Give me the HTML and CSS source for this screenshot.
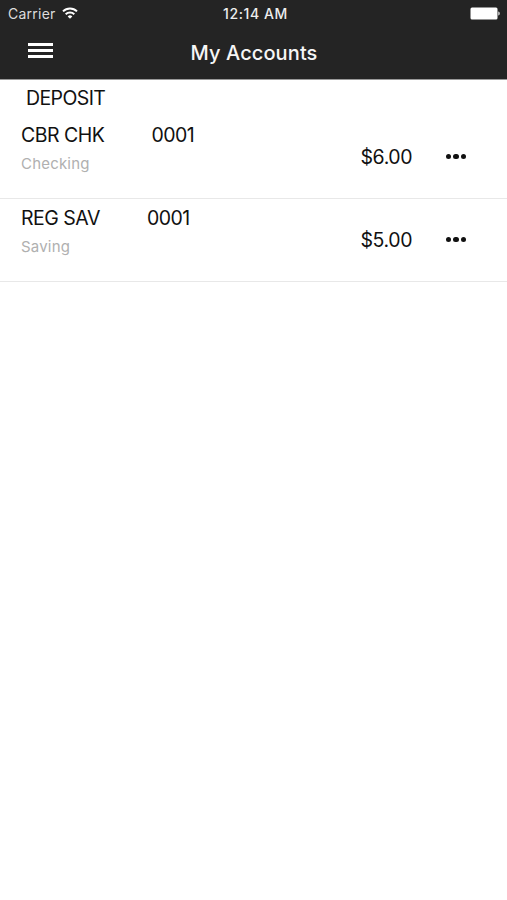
FILE: index.html
```html
<!DOCTYPE html>
<html lang="en">
<head>
  <meta charset="utf-8">
  <title>My Accounts</title>
  <meta name="viewport" content="width=device-width, initial-scale=1">
  <link rel="stylesheet" href="styles.css">
</head>
<body>
  <header>
    <div class="status">
      <div class="carrier">
        <span>Carrier</span>
        <svg class="wifi" width="16" height="12" viewBox="0 0 16 12" fill="none" stroke="#fff" stroke-width="2">
          <path d="M1 4.4a10 10 0 0 1 14 0M3.7 7.2a6.1 6.1 0 0 1 8.6 0"/>
          <path d="M8 11.8 5.7 9.4a3.2 3.2 0 0 1 4.6 0z" fill="#fff" stroke="none"/>
        </svg>
      </div>
      <span class="time">12:14 AM</span>
      <svg class="battery" width="31" height="13" viewBox="0 0 31 13" fill="#fff">
        <rect x="0.5" y="0.5" width="27" height="12" rx="1.5"/>
        <path d="M28.2 4.5c2.2.5 2.2 3.5 0 4z" fill="#ccc"/>
      </svg>
    </div>
    <nav class="navbar">
      <button class="menu" aria-label="Menu"><i></i><i></i><i></i></button>
      <h1>My Accounts</h1>
    </nav>
  </header>

  <main>
    <h2>DEPOSIT</h2>
    <section class="account">
      <div class="info">
        <div class="name"><span>CBR CHK</span><span>0001</span></div>
        <div class="type">Checking</div>
      </div>
      <div class="amount">$6.00</div>
      <button class="more" aria-label="More"><i></i><i></i><i></i></button>
    </section>
    <section class="account">
      <div class="info">
        <div class="name"><span>REG SAV</span><span>0001</span></div>
        <div class="type">Saving</div>
      </div>
      <div class="amount">$5.00</div>
      <button class="more" aria-label="More"><i></i><i></i><i></i></button>
    </section>
  </main>
</body>
</html>
```

FILE: styles.css
```css
* { box-sizing: border-box; }
body { margin: 0; background: #fff; color: #111; font-family: Inter, "Liberation Sans", sans-serif; }
button { padding: 0; border: none; background: none; }
header { height: 80px; background: #242424; border-bottom: 1px solid #999; color: #fff; }
.status { display: grid; grid-template-columns: 1fr auto 1fr; height: 27px; padding: 0 6px 0 10px; align-items: center; font-size: 14px; }
.carrier { display: flex; align-items: center; gap: 6px; margin-left: -2px; color: #ddd; letter-spacing: 0.25px; }
.wifi { margin-top: -2px; }
.time { color: #eee; font-weight: 500; letter-spacing: 0.6px; }
.battery { justify-self: end; }
.navbar { display: grid; grid-template-columns: 53px 1fr 52px; height: 52px; align-items: center; }
.menu { display: flex; flex-direction: column; gap: 3px; width: 25px; margin-left: 28px; margin-top: -5px; }
.menu i { height: 3px; background: #fff; }
h1 { margin: 0; color: #f6f6f6; font-size: 20px; font-weight: 500; letter-spacing: 0.1px; text-align: center; }
h2 { height: 35px; margin: 0; padding-left: 26px; font-size: 19.5px; font-weight: 400; letter-spacing: -0.6px; line-height: 36px; }
.account { display: flex; height: 83px; padding: 6px 41px 0 21px; border-bottom: 1px solid #e8e8e8; }
.account:first-of-type { height: 84px; }
.account:last-child { padding-top: 5px; }
.info { flex: 1; }
.name { display: flex; height: 28px; gap: 47px; font-size: 19.5px; letter-spacing: -0.5px; line-height: 28px; }
.type { font-size: 15px; letter-spacing: 0.2px; line-height: 30px; color: #b0b0b0; }
.amount { width: 85px; font-size: 19.5px; letter-spacing: -0.4px; line-height: 72px; }
.more { display: flex; height: 71px; gap: 2px; align-items: center; }
.more i { width: 5.5px; height: 5.5px; border-radius: 50%; background: #111; }
```
